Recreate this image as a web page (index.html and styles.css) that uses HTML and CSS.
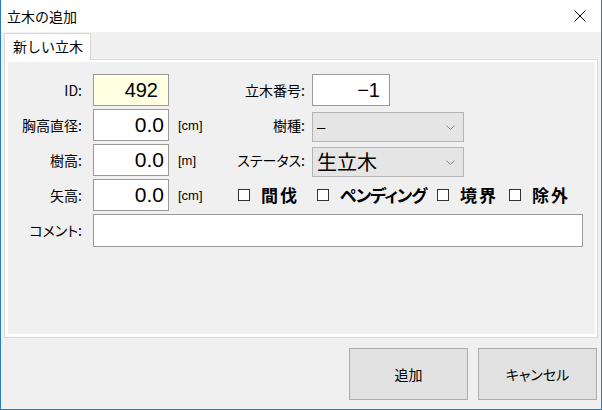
FILE: index.html
```html
<!DOCTYPE html>
<html lang="ja">
<head>
<meta charset="utf-8">
<title>立木の追加</title>
<link rel="stylesheet" href="styles.css">
</head>
<body>
<div class="window">
  <div class="titlebar">
    <span class="title">立木の追加</span>
    <span class="close"><svg width="12" height="12" viewBox="0 0 12 12"><path d="M0.5 0.5 L11.5 11.5 M11.5 0.5 L0.5 11.5" stroke="#000" stroke-width="1" fill="none"/></svg></span>
  </div>
  <div class="client">
    <div class="tabs">
      <div class="tabstrip"><div class="tab">新しい立木</div></div>
      <div class="tabpanel">
        <div class="page">
          <div class="form">
            <div class="lbl c1">ID:</div>
            <div class="tb tb-id c2">492</div>
            <div class="lbl lbl-r c4">立木番号:</div>
            <div class="c5"><div class="tb tb-no">−1</div></div>

            <div class="lbl c1">胸高直径:</div>
            <div class="tb c2">0.0</div>
            <div class="unit c3">[cm]</div>
            <div class="lbl lbl-r c4">樹種:</div>
            <div class="c5"><div class="sel"><span class="sel-text sel-small">–</span><svg class="chev" width="9" height="5" viewBox="0 0 9 5"><path d="M0.5 0.5 L4.5 4.5 L8.5 0.5" stroke="#8a8a8a" fill="none"/></svg></div></div>

            <div class="lbl c1">樹高:</div>
            <div class="tb c2">0.0</div>
            <div class="unit c3">[m]</div>
            <div class="lbl lbl-r c4">ステータス:</div>
            <div class="c5"><div class="sel"><span class="sel-text sel-big">生立木</span><svg class="chev" width="9" height="5" viewBox="0 0 9 5"><path d="M0.5 0.5 L4.5 4.5 L8.5 0.5" stroke="#8a8a8a" fill="none"/></svg></div></div>

            <div class="lbl c1">矢高:</div>
            <div class="tb c2">0.0</div>
            <div class="unit c3">[cm]</div>
            <div class="checks">
              <div class="cb cb-a"><span class="box"></span><span class="kanji">間伐</span></div>
              <div class="cb cb-b"><span class="box"></span><span class="kana">ペンディング</span></div>
              <div class="cb cb-c"><span class="box"></span><span class="kanji">境界</span></div>
              <div class="cb"><span class="box"></span><span class="kanji">除外</span></div>
            </div>

            <div class="lbl c1">コメント:</div>
            <div class="tb tb-comment"></div>
          </div>
        </div>
      </div>
    </div>
    <div class="buttons">
      <div class="btn">追加</div>
      <div class="btn">キャンセル</div>
    </div>
  </div>
</div>
</body>
</html>
```

FILE: styles.css
```css
html, body {
  margin: 0;
  padding: 0;
  background: #fff;
}

body {
  font-family: "Noto Sans CJK JP", "Noto Sans", sans-serif;
  color: #000;
}

.window {
  width: 602px;
  height: 410px;
  box-sizing: border-box;
  border: 1px solid #2a7bc0;
  border-top: none;
  display: flex;
  flex-direction: column;
}

.titlebar {
  height: 32px;
  flex: none;
  background: #fff;
  display: flex;
  align-items: center;
  justify-content: space-between;
  padding-left: 6px;
  padding-right: 15px;
}

.title {
  font-size: 14px;
  line-height: 16px;
}

.close {
  display: flex;
  width: 12px;
  height: 12px;
  margin-top: -1px;
}

.client {
  flex: 1;
  background: #f0f0f0;
  padding: 1px 3px 0 3px;
  display: flex;
  flex-direction: column;
}

.tabstrip {
  display: flex;
  height: 27px;
  margin-bottom: -1px;
  position: relative;
  z-index: 1;
}

.tab {
  width: 87px;
  box-sizing: border-box;
  border: 1px solid #d9d9d9;
  border-bottom: none;
  background: #fff;
  padding-left: 8px;
  font-size: 14px;
  line-height: 25px;
}

.tabpanel {
  height: 279px;
  box-sizing: border-box;
  border: 1px solid #d9d9d9;
  background: #fff;
  padding: 2px 2px 3px 3px;
}

.page {
  height: 100%;
  box-sizing: border-box;
  background: #f0f0f0;
  padding: 12px 12px 0 0;
}

.form {
  display: grid;
  grid-template-columns: 85px 76px 51px 92px 1fr;
  grid-auto-rows: 32px;
  row-gap: 3px;
}

.c1 { grid-column: 1; }
.c2 { grid-column: 2; }
.c3 { grid-column: 3; }
.c4 { grid-column: 4; }
.c5 { grid-column: 5; }

.lbl {
  align-self: center;
  text-align: right;
  padding-right: 11px;
  font-size: 14px;
  line-height: 18px;
  font-feature-settings: "palt";
}

.lbl-r {
  padding-right: 7px;
}

.tb {
  box-sizing: border-box;
  height: 32px;
  border: 1px solid #9a9a9a;
  background: #fff;
  font-family: "Liberation Sans", "Noto Sans", sans-serif;
  font-size: 21px;
  line-height: 30px;
  text-align: right;
  padding-right: 4px;
}

.tb-id {
  background: #ffffe1;
  font-size: 20px;
  padding-right: 10px;
}

.tb-no {
  width: 78px;
  font-size: 20px;
  padding-right: 9px;
}

.tb-comment {
  grid-column: 2 / 6;
  height: 33px;
}

.unit {
  align-self: center;
  padding-left: 9px;
  font-family: "Liberation Sans", sans-serif;
  font-size: 13px;
}

.sel {
  width: 152px;
  height: 30px;
  margin-top: 3px;
  box-sizing: border-box;
  border: 1px solid #b4b4b4;
  background: #e5e5e5;
  display: flex;
  align-items: center;
  justify-content: space-between;
  padding: 0 8px 0 4px;
}

.sel-small {
  font-family: "Liberation Sans", sans-serif;
  font-size: 15px;
  margin-top: -2px;
}

.sel-big {
  font-size: 20px;
  line-height: 24px;
}

.chev {
  flex: none;
}

.checks {
  grid-column: 4 / 6;
  display: flex;
  align-items: center;
  padding-left: 18px;
}

.cb {
  display: flex;
  align-items: center;
  gap: 11px;
  font-weight: bold;
  font-size: 17px;
  line-height: 20px;
  flex: none;
}

.cb-a { width: 79px; }
.cb-b { width: 120px; }
.cb-c { width: 72px; }

.kanji {
  letter-spacing: 2px;
}

.kana {
  font-feature-settings: "palt";
  letter-spacing: -1px;
}

.box {
  width: 12px;
  height: 12px;
  box-sizing: border-box;
  border: 1px solid #333;
  background: #fff;
  flex: none;
}

.buttons {
  display: flex;
  justify-content: flex-end;
  gap: 10px;
  padding-top: 10px;
  padding-right: 1px;
}

.btn {
  width: 119px;
  height: 52px;
  box-sizing: border-box;
  border: 1px solid #adadad;
  background: #e1e1e1;
  display: flex;
  align-items: center;
  justify-content: center;
  font-size: 14px;
  font-feature-settings: "palt";
}
```
